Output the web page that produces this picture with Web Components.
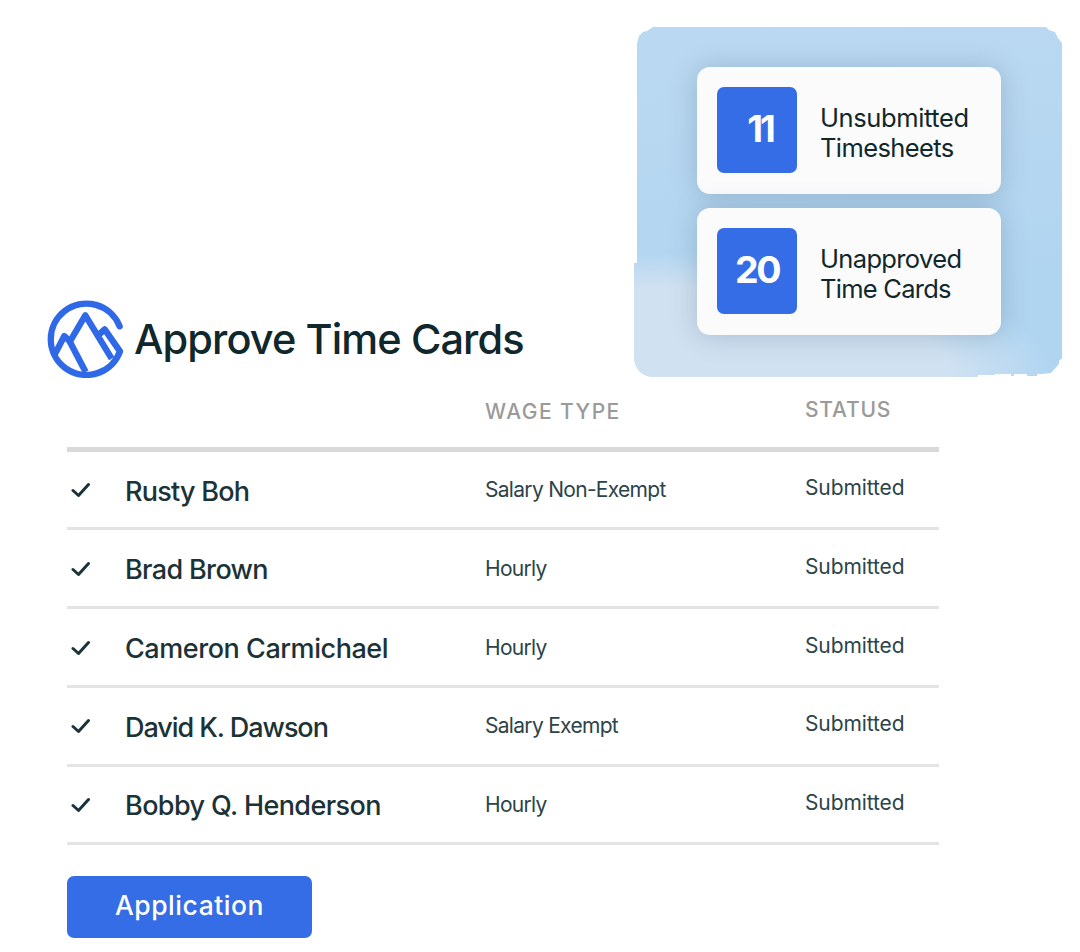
<!DOCTYPE html>
<html lang="en">
<head>
<meta charset="utf-8">
<title>Approve Time Cards</title>
<style>
    body {
        margin: 0;
        width: 1080px;
        height: 952px;
        overflow: hidden;
        background: #fff;
        color: #10272c;
        font-family: Inter, "Liberation Sans", sans-serif;
    }
</style>
</head>
<body>
<time-page>
    <page-title slot="title">Approve Time Cards</page-title>
    <stat-panel slot="stats">
        <stat-card value="11" style="--num-gap: -3px; --num-pad: 6px; --num-size: 36.5px"><span style="letter-spacing: -0.4px">Unsubmitted</span><br><span style="letter-spacing: -0.6px">Timesheets</span></stat-card>
        <stat-card value="20" style="--num-gap: -2.5px"><span style="letter-spacing: -0.65px">Unapproved</span><br><span style="letter-spacing: -0.75px">Time Cards</span></stat-card>
    </stat-panel>
    <card-table>
        <card-row wage="Salary Non-Exempt" status="Submitted" style="--name-gap: -0.75px">Rusty Boh</card-row>
        <card-row wage="Hourly" status="Submitted" style="--name-gap: -0.65px">Brad Brown</card-row>
        <card-row wage="Hourly" status="Submitted" style="--name-gap: -0.45px">Cameron Carmichael</card-row>
        <card-row wage="Salary Exempt" status="Submitted" style="--name-gap: -1.05px">David K. Dawson</card-row>
        <card-row wage="Hourly" status="Submitted" style="--name-gap: -0.6px">Bobby Q. Henderson</card-row>
    </card-table>
    <action-button slot="action">Application</action-button>
</time-page>

<script>
class TimePage extends HTMLElement {
    constructor() {
        super();
        this.attachShadow({ mode: 'open' });
        this.shadowRoot.innerHTML = `
            <style>
                :host {
                    display: block;
                    padding: 27px 18px 0 46px;
                }

                header {
                    display: flex;
                    justify-content: space-between;
                    align-items: flex-end;
                    height: 353px;
                }

                main {
                    padding-left: 21px;
                }

                footer {
                    padding: 31px 0 0 21px;
                }
            </style>
            <header>
                <slot name="title"></slot>
                <slot name="stats"></slot>
            </header>
            <main><slot></slot></main>
            <footer><slot name="action"></slot></footer>
        `;
    }
}

class PageTitle extends HTMLElement {
    constructor() {
        super();
        this.attachShadow({ mode: 'open' });
        this.shadowRoot.innerHTML = `
            <style>
                :host {
                    display: flex;
                    align-items: center;
                    gap: 10px;
                }

                svg {
                    display: block;
                    width: 78px;
                    height: 82px;
                    margin-bottom: 2px;
                    fill: none;
                    stroke: #2f69e7;
                    stroke-width: 19;
                    stroke-linejoin: round;
                }

                h1 {
                    margin: 0;
                    padding-top: 2px;
                    font-size: 41.5px;
                    font-weight: 450;
                    line-height: 50px;
                    letter-spacing: -0.9px;
                    white-space: nowrap;
                }
            </style>
            <svg viewBox="50 24 234 246">
                <path d="M271 115A107 107 0 1 0 272 190L226 124L212 137" stroke-linecap="round"/>
                <path d="M76 200L105 144L122 160L168 82L247 212"/>
                <path d="M120 158L169 252"/>
            </svg>
            <h1><slot></slot></h1>
        `;
    }
}

class StatPanel extends HTMLElement {
    constructor() {
        super();
        this.attachShadow({ mode: 'open' });
        this.shadowRoot.innerHTML = `
            <style>
                :host {
                    display: flex;
                    flex-direction: column;
                    gap: 14px;
                    box-sizing: border-box;
                    width: 428px;
                    height: 350px;
                    margin-bottom: 3px;
                    padding: 40px 61px 0 63px;
                    background:
                        radial-gradient(ellipse 370px 125px at 50px 350px, #d0e1f1 0 72%, rgba(208,225,241,0) 100%),
                        linear-gradient(175deg, #bad8f1, #b8d7f0 25%, #b0d5f1 75%);
                    /* the lower part is a little wider than the upper one */
                    clip-path: path("M19 0H412L415 3L421 5L424 11L428 16V331L425 334L425 337L417 346L407 347H403V349H393V347H380V349H377V347H361V348H344V350H20Q2 349 0 331V236H3V16L5 9L9 5L13 4Z");
                }
            </style>
            <slot></slot>
        `;
    }
}

class StatCard extends HTMLElement {
    constructor() {
        super();
        this.attachShadow({ mode: 'open' });
        this.shadowRoot.innerHTML = `
            <style>
                :host {
                    display: flex;
                    align-items: center;
                    gap: 23px;
                    box-sizing: border-box;
                    height: 127px;
                    padding-left: 20px;
                    border-radius: 13px;
                    background: #fbfbfc;
                    box-shadow: 0 1px 26px rgba(70,95,120,0.28);
                }

                #value {
                    display: flex;
                    align-items: center;
                    justify-content: center;
                    box-sizing: border-box;
                    width: 80px;
                    height: 86px;
                    padding-left: var(--num-pad, 0);
                    padding-bottom: 3px;
                    margin-bottom: 1px;
                    border-radius: 7px;
                    background: #356de7;
                    color: #fff;
                    font-size: var(--num-size, 37.5px);
                    font-weight: 700;
                    letter-spacing: var(--num-gap);
                }

                #label {
                    padding-top: 4px;
                    font-size: 25.5px;
                    line-height: 29.5px;
                    white-space: nowrap;
                }
            </style>
            <div id="value"></div>
            <div id="label"><slot></slot></div>
        `;
        this.shadowRoot.querySelector('#value').textContent = this.getAttribute('value');
    }
}

class CardTable extends HTMLElement {
    constructor() {
        super();
        this.attachShadow({ mode: 'open' });
        this.shadowRoot.innerHTML = `
            <style>
                :host {
                    display: block;
                    width: 872px;
                }

                #head {
                    display: grid;
                    grid-template-columns: 418px 320px 1fr;
                    box-sizing: border-box;
                    height: 71.8px;
                    padding-top: 18.5px;
                    border-bottom: 5px solid #d9d9d9;
                    color: #9a9a9a;
                    font-size: 21px;
                    font-weight: 450;
                    line-height: 26px;
                    letter-spacing: 1.45px;
                }

                #status {
                    margin-top: -2px;
                    letter-spacing: 0.8px;
                }
            </style>
            <div id="head">
                <span></span>
                <span>WAGE TYPE</span>
                <span id="status">STATUS</span>
            </div>
            <slot></slot>
        `;
    }
}

class CardRow extends HTMLElement {
    constructor() {
        super();
        this.attachShadow({ mode: 'open' });
        this.shadowRoot.innerHTML = `
            <style>
                :host {
                    display: grid;
                    grid-template-columns: 58px 360px 320px 1fr;
                    align-items: center;
                    box-sizing: border-box;
                    height: 78.7px;
                    border-bottom: 3px solid #e4e4e4;
                    white-space: nowrap;
                }

                svg {
                    display: block;
                    width: 20px;
                    height: 16px;
                    margin: 1px 0 0 4px;
                    fill: none;
                    stroke: #1a3339;
                    stroke-width: 3;
                    stroke-linecap: round;
                    stroke-linejoin: round;
                }

                #name {
                    padding-top: 3px;
                    color: #1b3237;
                    font-size: 27px;
                    font-weight: 450;
                    letter-spacing: var(--name-gap, -0.7px);
                }

                #wage,
                #status {
                    color: #2c4448;
                    font-size: 21px;
                    letter-spacing: -0.7px;
                }

                #status {
                    padding-bottom: 4px;
                    letter-spacing: -0.1px;
                }
            </style>
            <svg viewBox="0 0 20 16"><path d="M2 8.5L7.5 13.5L17.5 2.5"/></svg>
            <span id="name"><slot></slot></span>
            <span id="wage"></span>
            <span id="status"></span>
        `;
        this.shadowRoot.querySelector('#wage').textContent = this.getAttribute('wage');
        this.shadowRoot.querySelector('#status').textContent = this.getAttribute('status');
    }
}

class ActionButton extends HTMLElement {
    constructor() {
        super();
        this.attachShadow({ mode: 'open' });
        this.shadowRoot.innerHTML = `
            <style>
                :host {
                    display: block;
                }

                button {
                    display: block;
                    width: 245px;
                    height: 62px;
                    padding: 0 0 5px;
                    border: 0;
                    border-radius: 7px;
                    background: #356de7;
                    color: #fff;
                    font: 500 26.5px Inter, "Liberation Sans", sans-serif;
                    letter-spacing: 0.55px;
                }
            </style>
            <button><slot></slot></button>
        `;
    }
}

customElements.define('time-page', TimePage);
customElements.define('page-title', PageTitle);
customElements.define('stat-panel', StatPanel);
customElements.define('stat-card', StatCard);
customElements.define('card-table', CardTable);
customElements.define('card-row', CardRow);
customElements.define('action-button', ActionButton);
</script>
</body>
</html>
